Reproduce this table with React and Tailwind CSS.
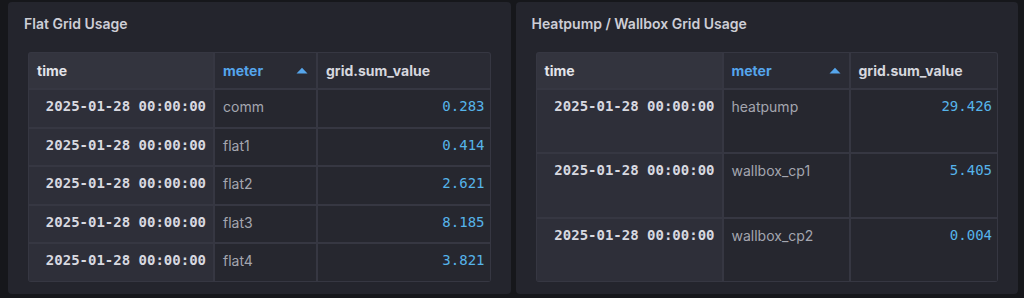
const panels = [
  {
    title: "Flat Grid Usage",
    cols: "grid-cols-[184px_101px_1fr]",
    rows: [
      ["comm", "0.283"],
      ["flat1", "0.414"],
      ["flat2", "2.621"],
      ["flat3", "8.185"],
      ["flat4", "3.821"],
    ],
  },
  {
    title: "Heatpump / Wallbox Grid Usage",
    cols: "grid-cols-[185px_125px_1fr]",
    rows: [
      ["heatpump", "29.426"],
      ["wallbox_cp1", "5.405"],
      ["wallbox_cp2", "0.004"],
    ],
  },
];

const SortUp = () => (
  <svg width="12" height="7" viewBox="0 0 12 7" className="shrink-0">
    <path d="M0.5 6.5 L6 0.8 L11.5 6.5 Z" fill="#56a6ec" />
  </svg>
);

const Table = ({ cols, rows }) => (
  <div className="flex-1 rounded-[3px] bg-[#363742] p-px flex flex-col gap-[2px]">
    <div className={`grid ${cols} gap-[2px] h-[35px]`}>
      <div className="bg-[#33343e] rounded-tl-[2px] flex items-center px-2 font-bold text-[#e3e4ea]">time</div>
      <div className="bg-[#2a2b34] flex items-center justify-between px-2 font-bold text-[#55a5ec]">
        <span>meter</span>
        <SortUp />
      </div>
      <div className="bg-[#2a2b34] rounded-tr-[2px] flex items-center px-2 font-bold text-[#d6d7de]">grid.sum_value</div>
    </div>
    <div className="flex-1 flex flex-col gap-[2px]">
      {rows.map(([meter, value], i) => (
        <div key={i} className={`grid ${cols} gap-[2px] flex-1`}>
          <div className="bg-[#2e2f39] pt-[6px] pr-[7px] text-right font-['DejaVu_Sans_Mono',monospace] font-bold text-[14px] text-[#d8d9e0]">
            2025-01-28 00:00:00
          </div>
          <div className="bg-[#26272f] pt-[6px] px-2 text-[#a4a6af]">{meter}</div>
          <div className="bg-[#26272f] pt-[6px] pr-[5px] text-right font-['DejaVu_Sans_Mono',monospace] text-[14px] text-[#56b4ea]">
            {value}
          </div>
        </div>
      ))}
    </div>
  </div>
);

export default function App() {
  return (
    <div className="w-[1024px] h-[298px] bg-[#16171b] flex gap-[5px] pl-2 pr-[6px] pt-[2px] pb-1 font-['Inter',sans-serif] text-[14px]">
      {panels.map((p) => (
        <div key={p.title} className="flex-1 bg-[#24252d] rounded-[4px] flex flex-col pt-[13px] px-[20px] pb-[12px]">
          <h2 className="font-semibold text-[14px] leading-[17px] text-[#cdced6] -ml-1 mb-[20px]">{p.title}</h2>
          <Table cols={p.cols} rows={p.rows} />
        </div>
      ))}
    </div>
  );
}
